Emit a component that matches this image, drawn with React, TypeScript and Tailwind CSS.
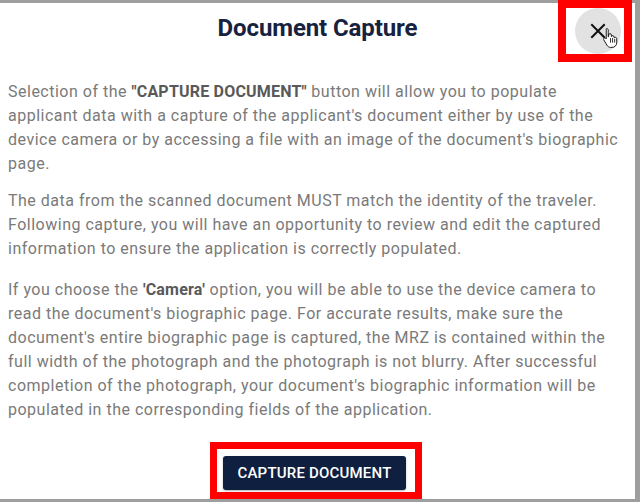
import React from 'react';

const CloseIcon: React.FC = () => (
  <svg width="16" height="16" viewBox="0 0 16 16" fill="none" stroke="#111" strokeWidth="2" strokeLinecap="square">
    <path d="M2 2 L14 14 M14 2 L2 14" />
  </svg>
);

const HandCursor: React.FC = () => (
  <svg width="17" height="21" viewBox="0 0 18 22" className="absolute left-[27px] top-[19px]">
    <path
      d="M5 1.5c1 0 1.6.7 1.6 1.6v7.2l.4-.1V8.4c0-.9.7-1.5 1.5-1.5s1.5.6 1.5 1.5v1.7c.3-.7.9-1 1.5-1 .8 0 1.4.6 1.4 1.4v1c.3-.5.8-.7 1.3-.7.8 0 1.4.7 1.4 1.5v4.2c0 2.9-2.2 5-5 5H9.3c-1.8 0-3.2-.9-4.1-2.4L1.9 13.5c-.4-.7-.2-1.5.5-1.9.6-.3 1.3-.2 1.7.3l.4.6V3.1C4.5 2.2 4.1 1.5 5 1.5z"
      fill="#fff"
      stroke="#111"
      strokeWidth="1"
      strokeLinejoin="round"
    />
    <path d="M9 12v4M11.2 12v4M13.4 13v3" stroke="#111" strokeWidth="0.9" strokeLinecap="round" />
  </svg>
);

export default function App() {
  return (
    <div
      className="relative w-[640px] h-[502px] bg-[#9e9e9e] pt-[3px] pr-[5px] pb-[3px] overflow-hidden"
      style={{ fontFamily: 'Roboto, "Liberation Sans", sans-serif' }}
    >
      <div className="w-full h-full bg-white flex flex-col">
        {/* header */}
        <div className="flex items-center justify-center h-[50px] shrink-0">
          <h2 className="text-[24px] font-bold text-[#17223f] tracking-[-0.1px]">Document Capture</h2>
        </div>

        {/* body */}
        <div className="pl-[8px] pr-[14px] pt-[27px] text-[16px] leading-[24px] text-[#7a7a7a] tracking-[0.5px]">
          <p>
            Selection of the <b className="text-[#595959] tracking-[0.2px]">"CAPTURE DOCUMENT"</b> button will allow
            you to populate applicant data with a capture of the applicant's document either by use of the device
            camera or by accessing a file with an image of the document's biographic page.
          </p>
          <p className="mt-[13px]">
            The data from the scanned document MUST match the identity of the traveler. Following capture, you will
            have an opportunity to review and edit the captured information to ensure the application is correctly
            populated.
          </p>
          <p className="mt-[17px]">
            If you choose the <b className="text-[#595959] tracking-[0.2px]">'Camera'</b> option, you will be able to
            use the device camera to read the document's biographic page. For accurate results, make sure the
            document's entire biographic page is captured, the MRZ is contained within the full width of the
            photograph and the photograph is not blurry. After successful completion of the photograph, your
            document's biographic information will be populated in the corresponding fields of the application.
          </p>
        </div>

        {/* footer */}
        <div className="flex justify-center mt-[20px] ml-[-3px]">
          <div className="border-[7px] border-[#f00] pl-[6px] pr-[9px] pt-[7px] pb-[2px]">
            <button className="h-[34px] px-[14px] rounded-[3px] bg-[#0f1f3f] text-white text-[15px] font-medium tracking-[0.2px] shadow-[0_1px_2px_rgba(0,0,0,0.3)]">
              CAPTURE DOCUMENT
            </button>
          </div>
        </div>
      </div>

      {/* highlighted close button */}
      <div className="absolute left-[558px] top-0 w-[74px] h-[62px] border-[8px] border-[#f00] bg-white">
        <div className="relative ml-[9px] w-[46px] h-[46px] rounded-full bg-[#e2e2e2] flex items-center justify-center">
          <CloseIcon />
          <HandCursor />
        </div>
      </div>
    </div>
  );
}
